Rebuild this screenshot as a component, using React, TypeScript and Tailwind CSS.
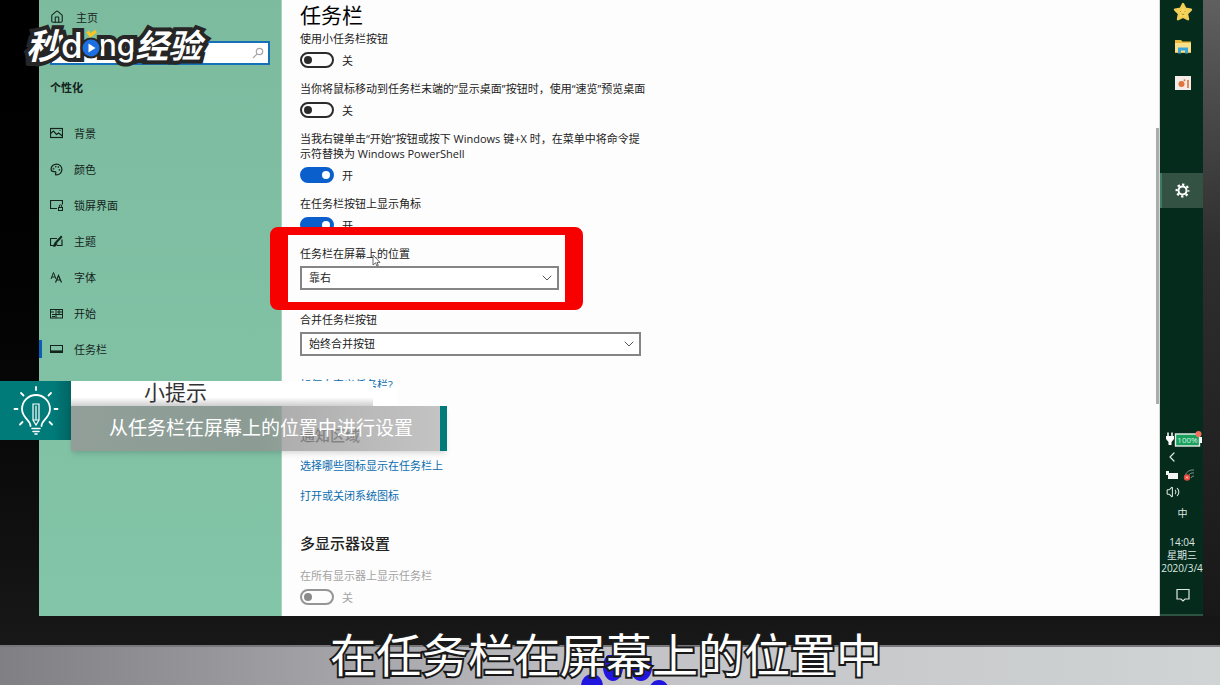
import { ReactNode, useState } from 'react';
import { ChevronDown, ChevronLeft, House, Palette, Search, Settings, Volume2 } from 'lucide-react';

interface NavItem {
  id: string;
  label: string;
  icon: ReactNode;
}

const stroke = { fill: 'none', stroke: 'currentColor', strokeWidth: 1 };

const NAV_ITEMS: NavItem[] = [
  {
    id: 'background',
    label: '背景',
    icon: (
      <svg width="13" height="13" viewBox="0 0 13 13" {...stroke}>
        <rect x="0.5" y="1.5" width="12" height="9" strokeWidth="1.2" />
        <path d="M0.5 6.5 L3.5 4 L6.5 7.5 L8.5 6 L12.5 9" strokeWidth="1.2" />
        <path d="M9.5 3.5 H10.5" />
      </svg>
    ),
  },
  { id: 'colors', label: '颜色', icon: <Palette size={13} strokeWidth={2.2} className="-scale-x-100" /> },
  {
    id: 'lockscreen',
    label: '锁屏界面',
    icon: (
      <svg width="13" height="13" viewBox="0 0 13 13" {...stroke}>
        <path d="M7 9.5 H0.5 V1.5 H12.5 V5.5" strokeWidth="1.2" />
        <rect x="8.5" y="8.5" width="4" height="3" />
        <path d="M9.3 8.5 V7 a1.2 1.2 0 0 1 2.4 0 V8.5" />
      </svg>
    ),
  },
  {
    id: 'themes',
    label: '主题',
    icon: (
      <svg width="13" height="13" viewBox="0 0 13 13" {...stroke}>
        <path d="M7 3.5 H0.5 V10.5 H3.5 M12 4.5 V10.5 H7" strokeWidth="1.2" />
        <path d="M11.8 1.2 L6 7.5" strokeWidth="2" />
        <path d="M6 7.2 C4 7 4.8 10 3 11 C5.5 11.8 7.5 10 6.6 8 Z" fill="currentColor" />
      </svg>
    ),
  },
  {
    id: 'fonts',
    label: '字体',
    icon: (
      <svg width="13" height="13" viewBox="0 0 13 13" {...stroke}>
        <path d="M1 8 L3.5 1.5 L6 8 M2 6 H5" />
        <path d="M5.5 11.5 L8.5 4.5 L11.5 11.5 M6.6 9 H10.4" strokeWidth="1.2" />
      </svg>
    ),
  },
  {
    id: 'start',
    label: '开始',
    icon: (
      <svg width="13" height="13" viewBox="0 0 13 13" {...stroke}>
        <rect x="0.5" y="2.5" width="12" height="8.5" />
        <path d="M0.5 5 H4 M2 7.5 H12 M6 3 V7 M9 3 V7 M6 8 V11 M2 9.5 H5 M7 5 H12" />
      </svg>
    ),
  },
  {
    id: 'taskbar',
    label: '任务栏',
    icon: (
      <svg width="13" height="13" viewBox="0 0 13 13" {...stroke}>
        <rect x="0.5" y="2.5" width="12" height="7" />
        <path d="M0.5 8.2 H12.5" strokeWidth="1.6" />
      </svg>
    ),
  },
];

interface ToggleProps {
  id: string;
  label: string;
  defaultChecked?: boolean;
  disabled?: boolean;
}

function Toggle({ id, label, defaultChecked = false, disabled = false }: ToggleProps) {
  const [on, setOn] = useState(defaultChecked);

  return (
    <div className={cn('w-[350px]', disabled && 'text-[#a3a3a3]')}>
      <label htmlFor={id} className="block">{label}</label>
      <div className="mt-1.5 flex h-4 items-center gap-2">
        <input
          id={id}
          type="checkbox"
          role="switch"
          checked={on}
          disabled={disabled}
          onChange={(e) => setOn(e.target.checked)}
          className="flex h-4 w-[34px] appearance-none items-center rounded-full border-2 border-[#2b2b2b] px-[2px] before:size-2 before:rounded-full before:bg-[#2b2b2b] checked:justify-end checked:border-[#0a5fcc] checked:bg-[#0a5fcc] checked:before:bg-white disabled:border-[#959595] disabled:before:bg-[#8a8a8a]"
        />
        <span>{on ? '开' : '关'}</span>
      </div>
    </div>
  );
}

interface DropdownProps {
  id: string;
  label: string;
  options: string[];
  defaultValue: string;
}

function Dropdown({ id, label, options, defaultValue }: DropdownProps) {
  return (
    <div className="flex flex-col gap-[5px]">
      <label htmlFor={id}>{label}</label>
      <div className="relative">
        <select
          id={id}
          defaultValue={defaultValue}
          className="block h-6 w-full appearance-none border-2 border-[#858585] bg-white pl-[7px] leading-5 outline-none"
        >
          {options.map(o => <option key={o}>{o}</option>)}
        </select>
        <ChevronDown size={16} strokeWidth={1.5} className="pointer-events-none absolute top-1 right-1 text-[#555]" />
      </div>
    </div>
  );
}

function Sidebar() {
  const [active, setActive] = useState('taskbar');

  return (
    <aside className="w-[243px] shrink-0 border-r border-[#a8d3bf] bg-linear-to-b from-[#7dbb9f] to-[#83c5a8] text-[#14241c]">
      <a href="#home" className="flex h-[34px] items-center gap-3 pl-[11px]">
        <House size={14} strokeWidth={1.8} />
        主页
      </a>
      <div className="mt-[7px] mr-[11px] ml-[11px] flex h-6 items-center border-2 border-[#1670b8] bg-white pr-1">
        <input type="search" aria-label="查找设置" className="min-w-0 flex-1 px-2 outline-none" />
        <svg width="12" height="12" viewBox="0 0 12 12" fill="none" stroke="#a5a5a5" strokeWidth="1.2">
          <circle cx="7.5" cy="4.5" r="3.2" />
          <path d="M5.2 6.8 L1 11" />
        </svg>
      </div>
      <h2 className="mt-[15px] pl-[11px] leading-4 font-bold">个性化</h2>
      <nav className="mt-[19px]">
        {NAV_ITEMS.map(item => (
          <button
            key={item.id}
            type="button"
            onClick={() => setActive(item.id)}
            className="flex h-9 w-full items-center"
          >
            <span className={cn('h-[18px] w-[3px]', active === item.id && 'bg-[#0a5fb4]')} />
            <span className="mr-[11px] ml-2">{item.icon}</span>
            {item.label}
          </button>
        ))}
      </nav>
    </aside>
  );
}

function SettingsPanel() {
  return (
    <main className="min-w-0 flex-1 pl-[18px] text-[#222]">
      <h1 className="text-[21px] leading-[31px] text-black">任务栏</h1>
      <div className="flex flex-col gap-[13px]">
        <Toggle id="small" label="使用小任务栏按钮" />
        <Toggle id="peek" label="当你将鼠标移动到任务栏末端的“显示桌面”按钮时，使用“速览”预览桌面" />
        <Toggle id="powershell" defaultChecked label="当我右键单击“开始”按钮或按下 Windows 键+X 时，在菜单中将命令提示符替换为 Windows PowerShell" />
        <Toggle id="badges" defaultChecked label="在任务栏按钮上显示角标" />

        {/* Highlighted setting */}
        <div className="relative w-[259px]">
          <Dropdown id="position" label="任务栏在屏幕上的位置" options={['靠左', '顶部', '靠右', '底部']} defaultValue="靠右" />
          <div className="pointer-events-none absolute -top-[19px] -right-[24px] -bottom-5 -left-[30px] rounded-lg border-x-[18px] border-y-8 border-[#f60000]" />
          <svg width="9" height="13" viewBox="0 0 9 13" className="pointer-events-none absolute top-2 left-[72px]">
            <path d="M1 1 V11 L3.5 8.8 L5 12 L6.3 11.4 L5 8.4 H8 Z" fill="white" stroke="#555" strokeWidth="0.9" />
          </svg>
        </div>
      </div>

      <div className="mt-[22px] w-[341px]">
        <Dropdown id="combine" label="合并任务栏按钮" options={['始终合并按钮', '任务栏已满时', '从不']} defaultValue="始终合并按钮" />
      </div>
      <a href="#customize" className="mt-[21px] block text-[#0a6cae]">如何自定义任务栏?</a>

      <h2 className="mt-[33px] text-[15px] leading-5 font-medium">通知区域</h2>
      <div className="mt-[13px] flex flex-col items-start gap-[15px] text-[#0a6cae]">
        <a href="#icons">选择哪些图标显示在任务栏上</a>
        <a href="#system-icons">打开或关闭系统图标</a>
      </div>

      <h2 className="mt-[30px] mb-[15px] text-[15px] leading-5 font-medium">多显示器设置</h2>
      <Toggle id="all-displays" disabled label="在所有显示器上显示任务栏" />
    </main>
  );
}

function Taskbar() {
  return (
    <div className="flex w-[43px] shrink-0 flex-col items-center border-b-2 border-[#2e5340] bg-[#042b1b] text-[10px] leading-[13px] text-[#dfe8e3]">
      <button type="button" aria-label="收藏" className="mt-[2px] ml-0.5">
        <svg width="20" height="20" viewBox="0 0 20 20">
          <path d="M10 2 L12.4 6.8 L18 7.6 L14 11.6 L15 17.3 L10 14.8 L5 17.3 L6 11.6 L2 7.6 L7.6 6.8 Z" fill="#f7d85c" stroke="#f3cd55" strokeWidth="2.4" strokeLinejoin="round" />
          <path d="M7.6 9 V10 M12 9 V10 M8.6 12 Q10 13 11.4 12" stroke="#a0752a" strokeWidth="0.8" fill="none" />
        </svg>
      </button>
      <button type="button" aria-label="文件资源管理器" className="mt-4 ml-0.5">
        <svg width="18" height="18" viewBox="0 0 18 18">
          <path d="M1 2 H7 L8.5 3.5 H17 V15 H1 Z" fill="#e9b93f" />
          <path d="M1 5 H17 V14 H1 Z" fill="#fbe08a" />
          <path d="M4 15.5 V9.5 H14 V15.5 H11 V12.5 H7 V15.5 Z" fill="#38a5dc" />
        </svg>
      </button>
      <button type="button" aria-label="演示文稿" className="mt-[18px] ml-0.5">
        <svg width="18" height="18" viewBox="0 0 18 18">
          <rect x="1" y="2" width="16" height="14" fill="#f4ece8" />
          <circle cx="7.5" cy="10" r="3" fill="#e0743c" />
          <circle cx="10.5" cy="6.3" r="1" fill="#e0743c" />
          <rect x="13" y="6" width="2" height="8" fill="#e58a5a" />
        </svg>
      </button>
      <button type="button" aria-label="设置" className="mt-[81px] flex h-[35px] w-full items-center justify-center border-l-2 border-[#3d7a62] bg-[#335243] text-white">
        <svg width="15" height="15" viewBox="0 0 15 15" fill="none" stroke="currentColor">
          <circle cx="7.5" cy="7.5" r="4" strokeWidth="2" />
          <circle cx="7.5" cy="7.5" r="5.9" strokeWidth="2.2" strokeDasharray="2.3 2.334" strokeDashoffset="1.15" />
        </svg>
      </button>

      {/* System tray */}
      <div className="mt-auto flex w-full flex-col items-center">
        <svg width="40" height="18" viewBox="0 0 40 18" className="self-end">
          <path d="M5 1.5 V6 M9 1.5 V6" stroke="white" strokeWidth="1.5" />
          <path d="M3 5 H11 V8 L8.5 11 V14 H5.5 V11 L3 8 Z" fill="white" />
          <rect x="12.5" y="3" width="24" height="12" fill="#18a05c" stroke="#e9efec" strokeWidth="1.4" />
          <rect x="37" y="6" width="2" height="6" fill="white" />
          <text x="24.5" y="12" textAnchor="middle" fontSize="8" fill="#d9f5e5">100%</text>
          <circle cx="35.5" cy="3" r="3" fill="#f4725d" />
        </svg>
        <ChevronLeft size={16} strokeWidth={1.8} className="mr-5" />
        <div className="mt-1 mr-0.5 flex items-center gap-1">
          <svg width="14" height="12" viewBox="0 0 14 12">
            <path d="M1 2 H4 V4 H13 V10 H3 V6 H1 Z" fill="#f2f5f3" />
          </svg>
          <svg width="13" height="12" viewBox="0 0 13 12">
            <path d="M2 7 A8 8 0 0 1 11 1 M5 8 A5 5 0 0 1 11 4 M8 9 A3 3 0 0 1 11 7" stroke="#7d9388" fill="none" />
            <circle cx="4" cy="8.5" r="3.2" fill="#e5483c" />
            <path d="M3 7.5 L5 9.5 M5 7.5 L3 9.5" stroke="white" strokeWidth="0.8" />
          </svg>
        </div>
        <Volume2 size={14} strokeWidth={1.8} className="mt-1 mr-[18px]" />
        <span className="mt-2 ml-0.5">中</span>
        <div className="mt-4 flex flex-col items-center pl-px">
          <span>14:04</span>
          <span>星期三</span>
          <span>2020/3/4</span>
        </div>
        <button type="button" aria-label="通知" className="mt-[13px] mb-3 ml-0.5">
          <svg width="14" height="14" viewBox="0 0 14 14" fill="none" stroke="#dfe8e3" strokeWidth="1.2">
            <path d="M1 1.5 H13 V11 H9 L7 13 L5 11 H1 Z" />
          </svg>
        </button>
      </div>
    </div>
  );
}

function TipBanner() {
  return (
    <div className="absolute top-[381px] left-0 flex items-start">
      <div className="flex h-[59px] w-[71px] items-center justify-center bg-linear-to-r from-[#007b7a] from-75% to-[#006463]">
        <svg width="46" height="50" viewBox="0 0 46 50" fill="none" stroke="white" strokeWidth="1.8" strokeLinecap="round">
          <path d="M17.5 40 C17.5 34 9 32 9 23 A14 14 0 0 1 37 23 C37 32 28.5 34 28.5 40" />
          <path d="M20 18 H26 V34 L23 39 L20 34 Z M20 34 H26 M23 20 V33" strokeWidth="1.2" />
          <path d="M19 42.5 H27 M20 45.5 H26 M22 48 H24" strokeWidth="1.6" />
          <path d="M23 1 V4 M8 7 L10.5 9.5 M38 7 L35.5 9.5 M1.5 23 H4.5 M41.5 23 H44.5 M7 38.5 L9.5 36 M39 38.5 L36.5 36" />
        </svg>
      </div>
      <div className="w-[376px]">
        <div className="flex items-end">
          <div className="h-[25px] w-[302px] bg-linear-to-b from-white from-65% to-[#cfcfcf] pl-[73px] text-[21px] leading-[23px] text-[#333]">
            小提示
          </div>
          <div className="h-[18px] w-6 bg-white" />
        </div>
        <div className="h-[45px] border-r-[7px] border-[#007b7a] bg-linear-to-r from-[#969696]/80 via-[#8f8f8f]/75 to-[#b5b5b5]/80 pl-[38px] text-[19px] leading-[44px] text-white shadow-md shadow-black/10">
          从任务栏在屏幕上的位置中进行设置
        </div>
      </div>
    </div>
  );
}

function Watermark() {
  return (
    <div className="absolute top-[23px] left-[26px] flex h-11 items-center text-white [-webkit-text-stroke:8px_#262626] [paint-order:stroke_fill]">
      <span className="text-[35px] font-bold italic">秒</span>
      <span className="font-['Inter','Noto_Sans_CJK_SC',sans-serif] text-[35px] font-medium">d</span>
      <svg width="16" height="44" viewBox="0 0 16 44" className="relative z-10 overflow-visible">
        <circle cx="8" cy="25" r="10.5" fill="#262626" />
        <circle cx="8" cy="25" r="8.5" fill="#1b6fe0" />
        <path d="M5.5 20.5 L12.5 25 L5.5 29.5 Z" fill="white" />
        <path d="M4.5 8.5 L7.5 12.5 L13 8" fill="none" stroke="#fbc51b" strokeWidth="3" />
      </svg>
      <span className="font-['Inter','Noto_Sans_CJK_SC',sans-serif] text-[30px] font-medium">ng</span>
      <span className="text-[33px] font-bold italic">经验</span>
    </div>
  );
}

export default function App() {
  return (
    <div className="relative flex min-h-screen flex-col overflow-hidden bg-[#181818] font-['Open_Sans','Noto_Sans_CJK_SC',sans-serif] text-[11px] leading-[15px]">
      {/* Monitor */}
      <div className="flex flex-1 bg-linear-to-b from-black to-[#181818] pb-[29px] pl-[39px]">
        <Sidebar />
        <div className="flex min-w-0 flex-1 bg-[#fdfdfd]">
          <SettingsPanel />
          <div className="w-1 shrink-0 border-r border-[#d5d5d5] pt-32">
            <div className="h-[276px] bg-[#a9adab]" />
          </div>
        </div>
        <Taskbar />
        <div className="w-[17px] shrink-0 bg-linear-to-b from-[#606060] via-[#2f2f2f] via-40% to-[#181818]" />
      </div>

      {/* Stand */}
      <footer className="flex h-10 items-end justify-center border-t-2 border-[#77777b] bg-linear-to-r from-[#808084] via-[#c2c2c6] to-[#d0d4d4]">
        <svg width="92" height="30" viewBox="0 0 92 30" fill="#2116df" className="ml-[32px]">
          <ellipse cx="33" cy="12" rx="10" ry="14" />
          <ellipse cx="61" cy="12" rx="11" ry="14" />
          <ellipse cx="12" cy="31" rx="11" ry="12" />
          <ellipse cx="79" cy="36" rx="10" ry="11" />
        </svg>
      </footer>

      <TipBanner />
      <Watermark />
      <p className="absolute inset-x-0 bottom-0 pr-2 text-center text-[46px] leading-[62px] text-white [-webkit-text-stroke:4px_#1a1a1a] [paint-order:stroke_fill]">
        在任务栏在屏幕上的位置中
      </p>
    </div>
  );
}

function cn(...inputs: any[]) {
  return inputs.filter(Boolean).join(' ');
}
